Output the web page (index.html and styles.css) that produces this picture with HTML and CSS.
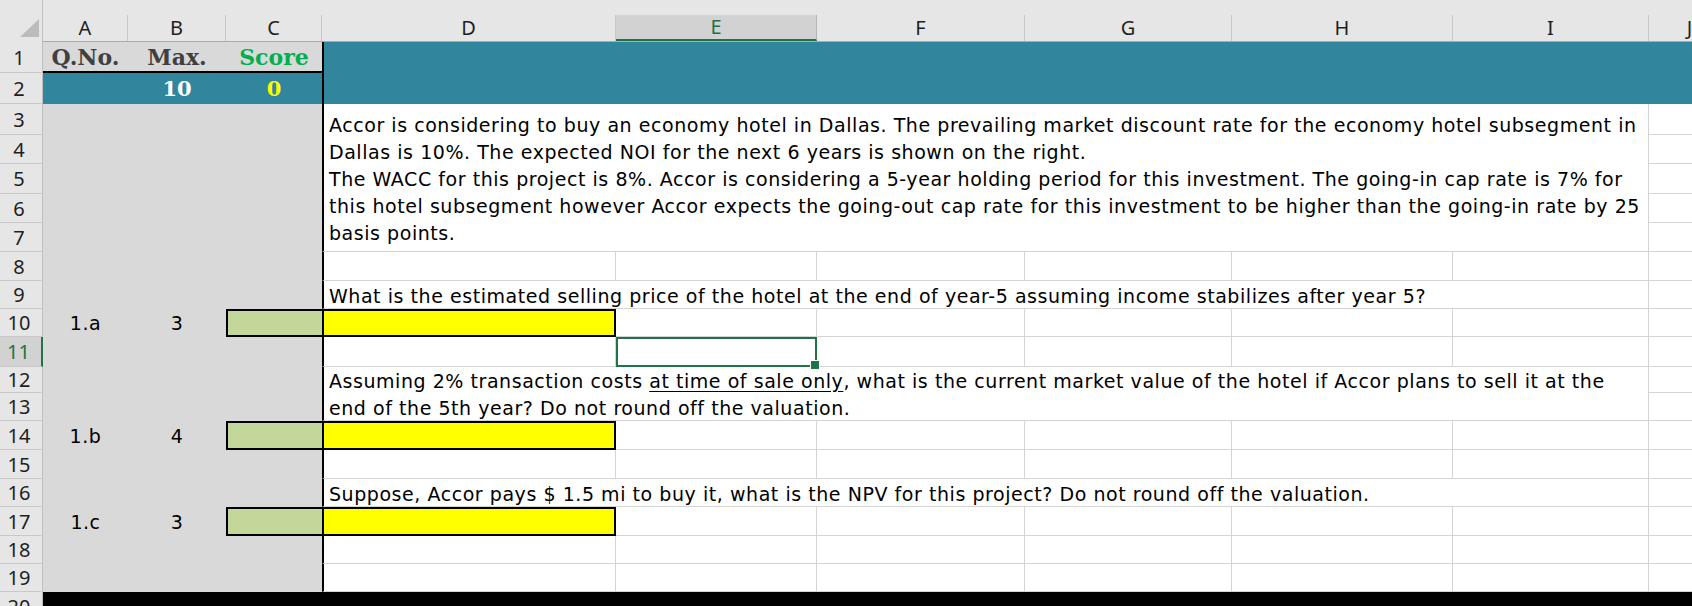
FILE: index.html
```html
<!DOCTYPE html>
<html lang="en">
<head>
<meta charset="utf-8">
<title>Accor valuation sheet</title>
<link rel="stylesheet" href="styles.css">
</head>
<body>
<div class="sheet">
  <!-- column headers -->
  <div class="corner"><svg class="tri" width="43" height="42" viewBox="0 0 43 42"><polygon points="20,37 39,37 39,19" fill="#bcbcbc"/></svg></div>
  <div class="ch"><span>A</span></div>
  <div class="ch"><span>B</span></div>
  <div class="ch"><span>C</span></div>
  <div class="ch"><span>D</span></div>
  <div class="ch ch-sel"><span>E</span></div>
  <div class="ch"><span>F</span></div>
  <div class="ch"><span>G</span></div>
  <div class="ch"><span>H</span></div>
  <div class="ch"><span>I</span></div>
  <div class="ch"><span>J</span></div>

  <!-- row 1 -->
  <div class="rh">1</div>
  <div class="title">Q.No.</div>
  <div class="title">Max.</div>
  <div class="title score">Score</div>
  <div class="banner"></div>

  <!-- row 2 -->
  <div class="rh">2</div>
  <div class="teal"></div>
  <div class="teal num">10</div>
  <div class="teal num yel">0</div>

  <!-- row 3 -->
  <div class="rh">3</div>
  <div class="gray span-r7"></div>
  <div class="txt span-r5"><p>Accor is considering to buy an economy hotel in Dallas. The prevailing market discount rate for the economy hotel subsegment in<br>Dallas is 10%. The expected NOI for the next 6 years is shown on the right.<br>The WACC for this project is 8%. Accor is considering a 5-year holding period for this investment. The going-in cap rate is 7% for<br>this hotel subsegment however Accor expects the going-out cap rate for this investment to be higher than the going-in rate by 25<br>basis points.</p></div>
  <div class="w"></div>

  <div class="rh">4</div><div class="w"></div>
  <div class="rh">5</div><div class="w"></div>
  <div class="rh">6</div><div class="w"></div>
  <div class="rh">7</div><div class="w"></div>

  <!-- row 8 -->
  <div class="rh">8</div>
  <div class="w dl"></div><div class="w"></div><div class="w"></div><div class="w"></div><div class="w"></div><div class="w"></div><div class="w"></div>

  <!-- row 9 -->
  <div class="rh">9</div>
  <div class="txt"><p>What is the estimated selling price of the hotel at the end of year-5 assuming income stabilizes after year 5?</p></div>
  <div class="w"></div>

  <!-- row 10 -->
  <div class="rh">10</div>
  <div class="q">1.a</div>
  <div class="q">3</div>
  <div class="ans-score"></div>
  <div class="ans"></div>
  <div class="w"></div><div class="w"></div><div class="w"></div><div class="w"></div><div class="w"></div><div class="w"></div>

  <!-- row 11 -->
  <div class="rh rh-sel">11</div>
  <div class="gray span-r3"></div>
  <div class="w dl"></div>
  <div class="w cell-sel"></div>
  <div class="w"></div><div class="w"></div><div class="w"></div><div class="w"></div><div class="w"></div>

  <!-- row 12-13 -->
  <div class="rh">12</div>
  <div class="txt span-r2"><p>Assuming 2% transaction costs <u>at time of sale only</u>, what is the current market value of the hotel if Accor plans to sell it at the<br>end of the 5th year? Do not round off the valuation.</p></div>
  <div class="w"></div>
  <div class="rh">13</div><div class="w"></div>

  <!-- row 14 -->
  <div class="rh">14</div>
  <div class="q">1.b</div>
  <div class="q">4</div>
  <div class="ans-score"></div>
  <div class="ans"></div>
  <div class="w"></div><div class="w"></div><div class="w"></div><div class="w"></div><div class="w"></div><div class="w"></div>

  <!-- row 15 -->
  <div class="rh">15</div>
  <div class="gray span-r2"></div>
  <div class="w dl"></div><div class="w"></div><div class="w"></div><div class="w"></div><div class="w"></div><div class="w"></div><div class="w"></div>

  <!-- row 16 -->
  <div class="rh">16</div>
  <div class="txt"><p>Suppose, Accor pays $ 1.5 mi to buy it, what is the NPV for this project? Do not round off the valuation.</p></div>
  <div class="w"></div>

  <!-- row 17 -->
  <div class="rh">17</div>
  <div class="q">1.c</div>
  <div class="q">3</div>
  <div class="ans-score"></div>
  <div class="ans"></div>
  <div class="w"></div><div class="w"></div><div class="w"></div><div class="w"></div><div class="w"></div><div class="w"></div>

  <!-- row 18 -->
  <div class="rh">18</div>
  <div class="gray span-r2"></div>
  <div class="w dl"></div><div class="w"></div><div class="w"></div><div class="w"></div><div class="w"></div><div class="w"></div><div class="w"></div>

  <!-- row 19 -->
  <div class="rh">19</div>
  <div class="w dl"></div><div class="w"></div><div class="w"></div><div class="w"></div><div class="w"></div><div class="w"></div><div class="w"></div>

  <!-- row 20 -->
  <div class="rh rh-last">20</div>
  <div class="blackrow"></div>
</div>
</body>
</html>
```

FILE: styles.css
```css
* { box-sizing: border-box; }

html, body {
  margin: 0;
  padding: 0;
  background: #ffffff;
  overflow: hidden;
}

.sheet {
  display: grid;
  width: 1692px;
  height: 606px;
  overflow: hidden;
  grid-template-columns: 43px 85px 98px 96px 294px 201px 208px 207px 221px 196px 82px;
  grid-template-rows: 42px 31px 31px 31px 29px 30px 29px 29px 29px 28px 28px 30px 26px 28px 29px 29px 28px 29px 28px 28px 28px;
  font-family: "DejaVu Sans", Verdana, sans-serif;
  font-size: 19px;
  letter-spacing: 0.55px;
  color: #000;
}

/* headers */
.corner {
  background: #e6e6e6;
  border-right: 1px solid #bfbfbf;
}
.tri { display: block; }

.ch {
  background: #e6e6e6;
  padding-top: 15px;
  border-bottom: 1px solid #ababab;
}
.ch span {
  display: flex;
  height: 100%;
  align-items: center;
  justify-content: center;
  border-right: 1px solid #c8c8c8;
  font-family: "Noto Sans", "Open Sans", sans-serif;
  font-size: 20px;
  letter-spacing: 0;
  color: #1f1f1f;
  padding-bottom: 1px;
}
.ch-sel span {
  background: #d2d2d2;
  color: #217346;
  border-bottom: 2px solid #217346;
  border-right-color: #b5b5b5;
}

.rh {
  background: #e6e6e6;
  border-right: 1px solid #bfbfbf;
  border-bottom: 1px solid #c8c8c8;
  display: flex;
  align-items: center;
  justify-content: center;
  padding-right: 4px;
  font-family: "Noto Sans", "Open Sans", sans-serif;
  font-size: 20px;
  letter-spacing: 0;
  color: #1f1f1f;
}
.rh-sel {
  background: #d2d2d2;
  color: #217346;
  border-right: 2px solid #217346;
}
.rh-last {
  align-items: flex-start;
  padding-top: 1px;
}

/* row 1 / 2 */
.title {
  background: #d9d9d9;
  border-bottom: 2px solid #000;
  display: flex;
  align-items: center;
  justify-content: center;
  font-family: "DejaVu Serif", "Liberation Serif", serif;
  font-weight: bold;
  font-size: 22px;
  letter-spacing: 0;
  color: #404040;
  padding-top: 1px;
}
.title.score { color: #00b050; }

.banner {
  grid-column: span 7;
  grid-row: span 2;
  background: #31859c;
  border-left: 2px solid #000;
}

.teal {
  background: #31859c;
}
.num {
  display: flex;
  align-items: center;
  justify-content: center;
  font-family: "DejaVu Serif", "Liberation Serif", serif;
  font-weight: bold;
  font-size: 21px;
  letter-spacing: 0;
  color: #ffffff;
}
.num.yel { color: #ffff00; }

/* body cells */
.gray {
  grid-column: span 3;
  background: #d9d9d9;
}
.span-r7 { grid-row: span 7; }
.span-r5 { grid-row: span 5; }
.span-r3 { grid-row: span 3; }
.span-r2 { grid-row: span 2; }

.w {
  background: #fff;
  border-right: 1px solid #d4d4d4;
  border-bottom: 1px solid #d4d4d4;
}
.dl { border-left: 2px solid #000; }

.txt {
  grid-column: span 6;
  display: flex;
  align-items: center;
  padding: 3px 4px 0 5px;
  background: #fff;
  border-left: 2px solid #000;
  border-right: 1px solid #d4d4d4;
  border-bottom: 1px solid #d4d4d4;
  overflow: hidden;
}
.txt p {
  margin: 0;
  line-height: 27px;
  white-space: nowrap;
}
.txt u { text-underline-offset: 3px; }

.q {
  background: #d9d9d9;
  display: flex;
  align-items: center;
  justify-content: center;
}

.ans-score {
  background: #c4d79b;
  border: 2px solid #000;
  border-right: none;
}
.ans {
  background: #ffff00;
  border: 2px solid #000;
}

.cell-sel {
  position: relative;
  z-index: 1;
  border: 2px solid #217346;
}
.cell-sel::after {
  content: "";
  position: absolute;
  right: -5px;
  bottom: -5px;
  width: 8px;
  height: 8px;
  background: #217346;
  border: 1px solid #fff;
}

.blackrow {
  grid-column: span 10;
  background: #000;
}
```
